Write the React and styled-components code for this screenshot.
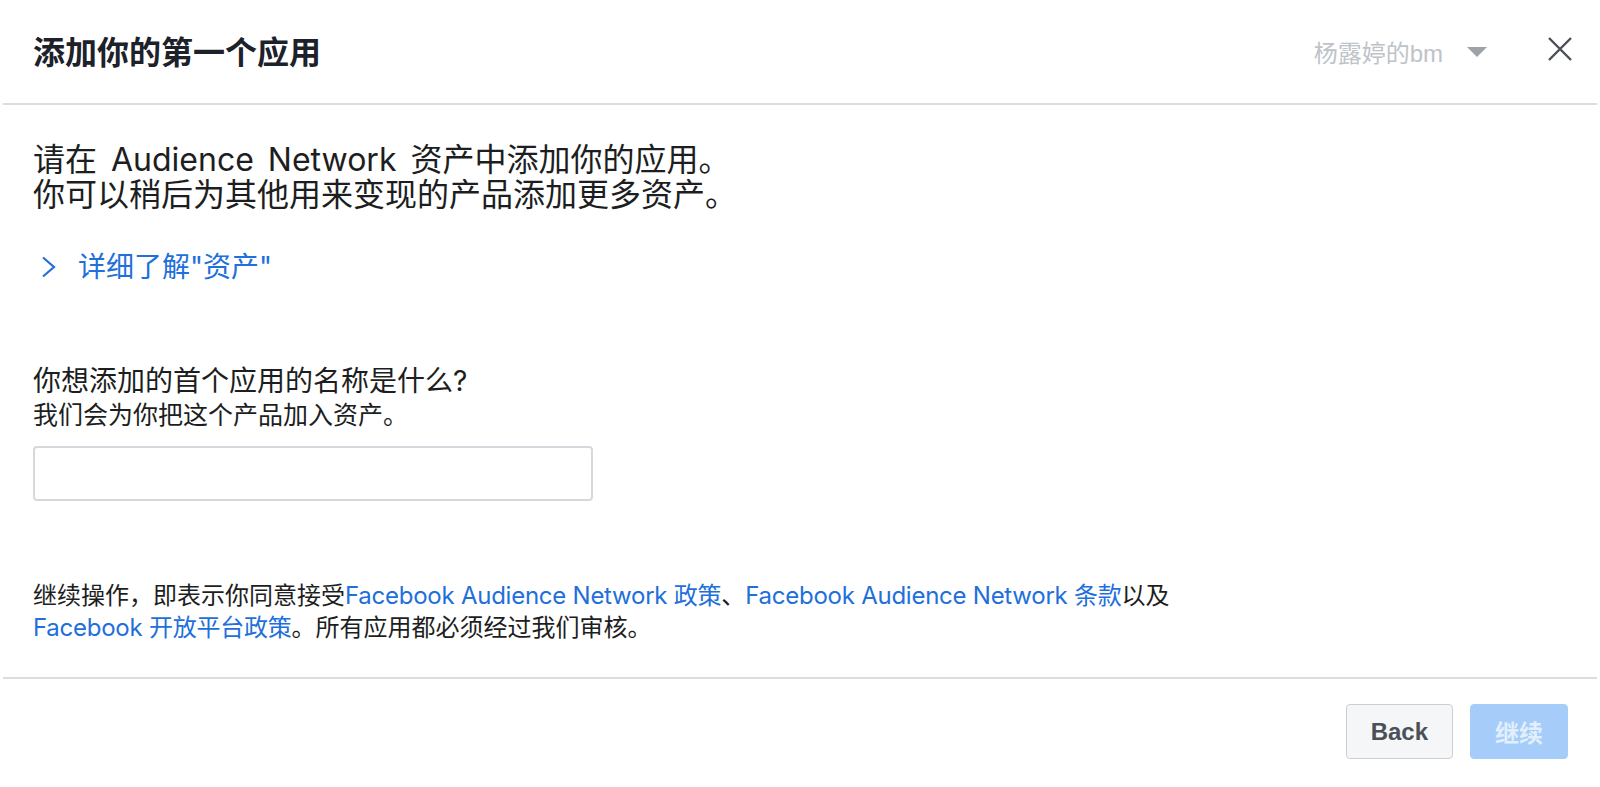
import React from 'react';
import styled, { createGlobalStyle } from 'styled-components';

const GlobalStyle = createGlobalStyle`
  html, body {
    margin: 0;
    padding: 0;
    background: #ffffff;
  }
  body {
    font-family: Inter, "Noto Sans CJK SC", sans-serif;
    color: #1c1e21;
  }
`;

const Dialog = styled.div`
  margin: 0 3px;
  min-height: 787px;
  display: flex;
  flex-direction: column;
  background: #fff;
`;

const Header = styled.header`
  height: 103px;
  display: flex;
  align-items: center;
  padding: 0 25px 0 30px;
  border-bottom: 2px solid #dadde1;
`;

const Title = styled.h1`
  flex: 1;
  margin: 0;
  font-size: 32px;
  font-weight: 700;
  color: #1d2129;
  line-height: 40px;
  padding-top: 3px;
`;

const AccountPicker = styled.div`
  display: flex;
  align-items: center;
  gap: 24px;
  font-family: "Liberation Sans", "Noto Sans CJK SC", sans-serif;
  font-size: 24px;
  color: #bec3c9;
  margin-right: 61px;
`;

const CloseButton = styled.button`
  border: none;
  background: none;
  padding: 0;
  width: 24px;
  height: 24px;
  display: flex;
  cursor: pointer;
  margin-bottom: 6px;
`;

const Content = styled.main`
  padding: 37px 30px 33px;
  border-bottom: 2px solid #dadde1;
`;

const Intro = styled.p`
  margin: 0;
  font-size: 32px;
  line-height: 35px;
  word-spacing: 5px;
  color: #1c1e21;
`;

const LearnMore = styled.a`
  display: flex;
  align-items: center;
  gap: 21px;
  margin-top: 38px;
  padding-left: 7px;
  font-size: 28px;
  line-height: 34px;
  color: #216fdb;
  text-decoration: none;
  cursor: pointer;
`;

const Label = styled.div`
  margin-top: 80px;
  font-size: 28px;
  line-height: 34px;
  color: #1c1e21;
`;

const Hint = styled.div`
  font-size: 25px;
  line-height: 34px;
  color: #1c1e21;
`;

const NameInput = styled.input`
  display: block;
  box-sizing: border-box;
  margin-top: 14px;
  width: 560px;
  height: 55px;
  border: 2px solid #d5d8dd;
  border-radius: 4px;
  font-size: 26px;
  padding: 0 12px;
  outline: none;
`;

const Terms = styled.p`
  margin: 79px 0 0;
  font-size: 24px;
  line-height: 32px;
  color: #1c1e21;
`;

const TermsLink = styled.a`
  color: #216fdb;
  letter-spacing: -0.25px;
  text-decoration: none;
  cursor: pointer;
`;

const Footer = styled.footer`
  display: flex;
  justify-content: flex-end;
  gap: 17px;
  padding: 25px 29px 28px;
`;

const Button = styled.button`
  box-sizing: border-box;
  height: 55px;
  padding: 0 24px;
  border-radius: 4px;
  font-family: "Liberation Sans", "Noto Sans CJK SC", sans-serif;
  font-size: 24px;
  font-weight: 700;
  cursor: pointer;
  border: 1px solid ${p => (p.$primary ? '#a6cdf9' : '#ccd0d5')};
  background: ${p => (p.$primary ? '#a6cdf9' : '#f5f6f7')};
  color: ${p => (p.$primary ? 'rgba(255,255,255,0.7)' : '#4b4f56')};
  min-width: ${p => (p.$primary ? '95px' : '107px')};
`;

const Caret = () => (
  <svg width="20" height="10" viewBox="0 0 20 10">
    <path d="M0 0 L20 0 L10 10 Z" fill="#9da1a8" />
  </svg>
);

const CloseIcon = () => (
  <svg width="24" height="24" viewBox="0 0 24 24">
    <path d="M1 1 L23 23 M23 1 L1 23" stroke="#4b4f56" strokeWidth="2.4" />
  </svg>
);

const Chevron = () => (
  <svg width="17" height="22" viewBox="0 0 17 22">
    <path d="M3 1.5 L14 11 L3 20.5" fill="none" stroke="#216fdb" strokeWidth="2.2" />
  </svg>
);

export default function App() {
  return (
    <>
      <GlobalStyle />
      <Dialog>
        <Header>
          <Title>添加你的第一个应用</Title>
          <AccountPicker>
            <span>杨露婷的bm</span>
            <Caret />
          </AccountPicker>
          <CloseButton aria-label="关闭">
            <CloseIcon />
          </CloseButton>
        </Header>
        <Content>
          <Intro>
            请在 Audience Network 资产中添加你的应用。
            <br />
            你可以稍后为其他用来变现的产品添加更多资产。
          </Intro>
          <LearnMore>
            <Chevron />
            <span>详细了解"资产"</span>
          </LearnMore>
          <Label>你想添加的首个应用的名称是什么?</Label>
          <Hint>我们会为你把这个产品加入资产。</Hint>
          <NameInput type="text" />
          <Terms>
            继续操作，即表示你同意接受
            <TermsLink>Facebook Audience Network 政策</TermsLink>、
            <TermsLink>Facebook Audience Network 条款</TermsLink>以及
            <br />
            <TermsLink>Facebook 开放平台政策</TermsLink>。所有应用都必须经过我们审核。
          </Terms>
        </Content>
        <Footer>
          <Button>Back</Button>
          <Button $primary>继续</Button>
        </Footer>
      </Dialog>
    </>
  );
}
